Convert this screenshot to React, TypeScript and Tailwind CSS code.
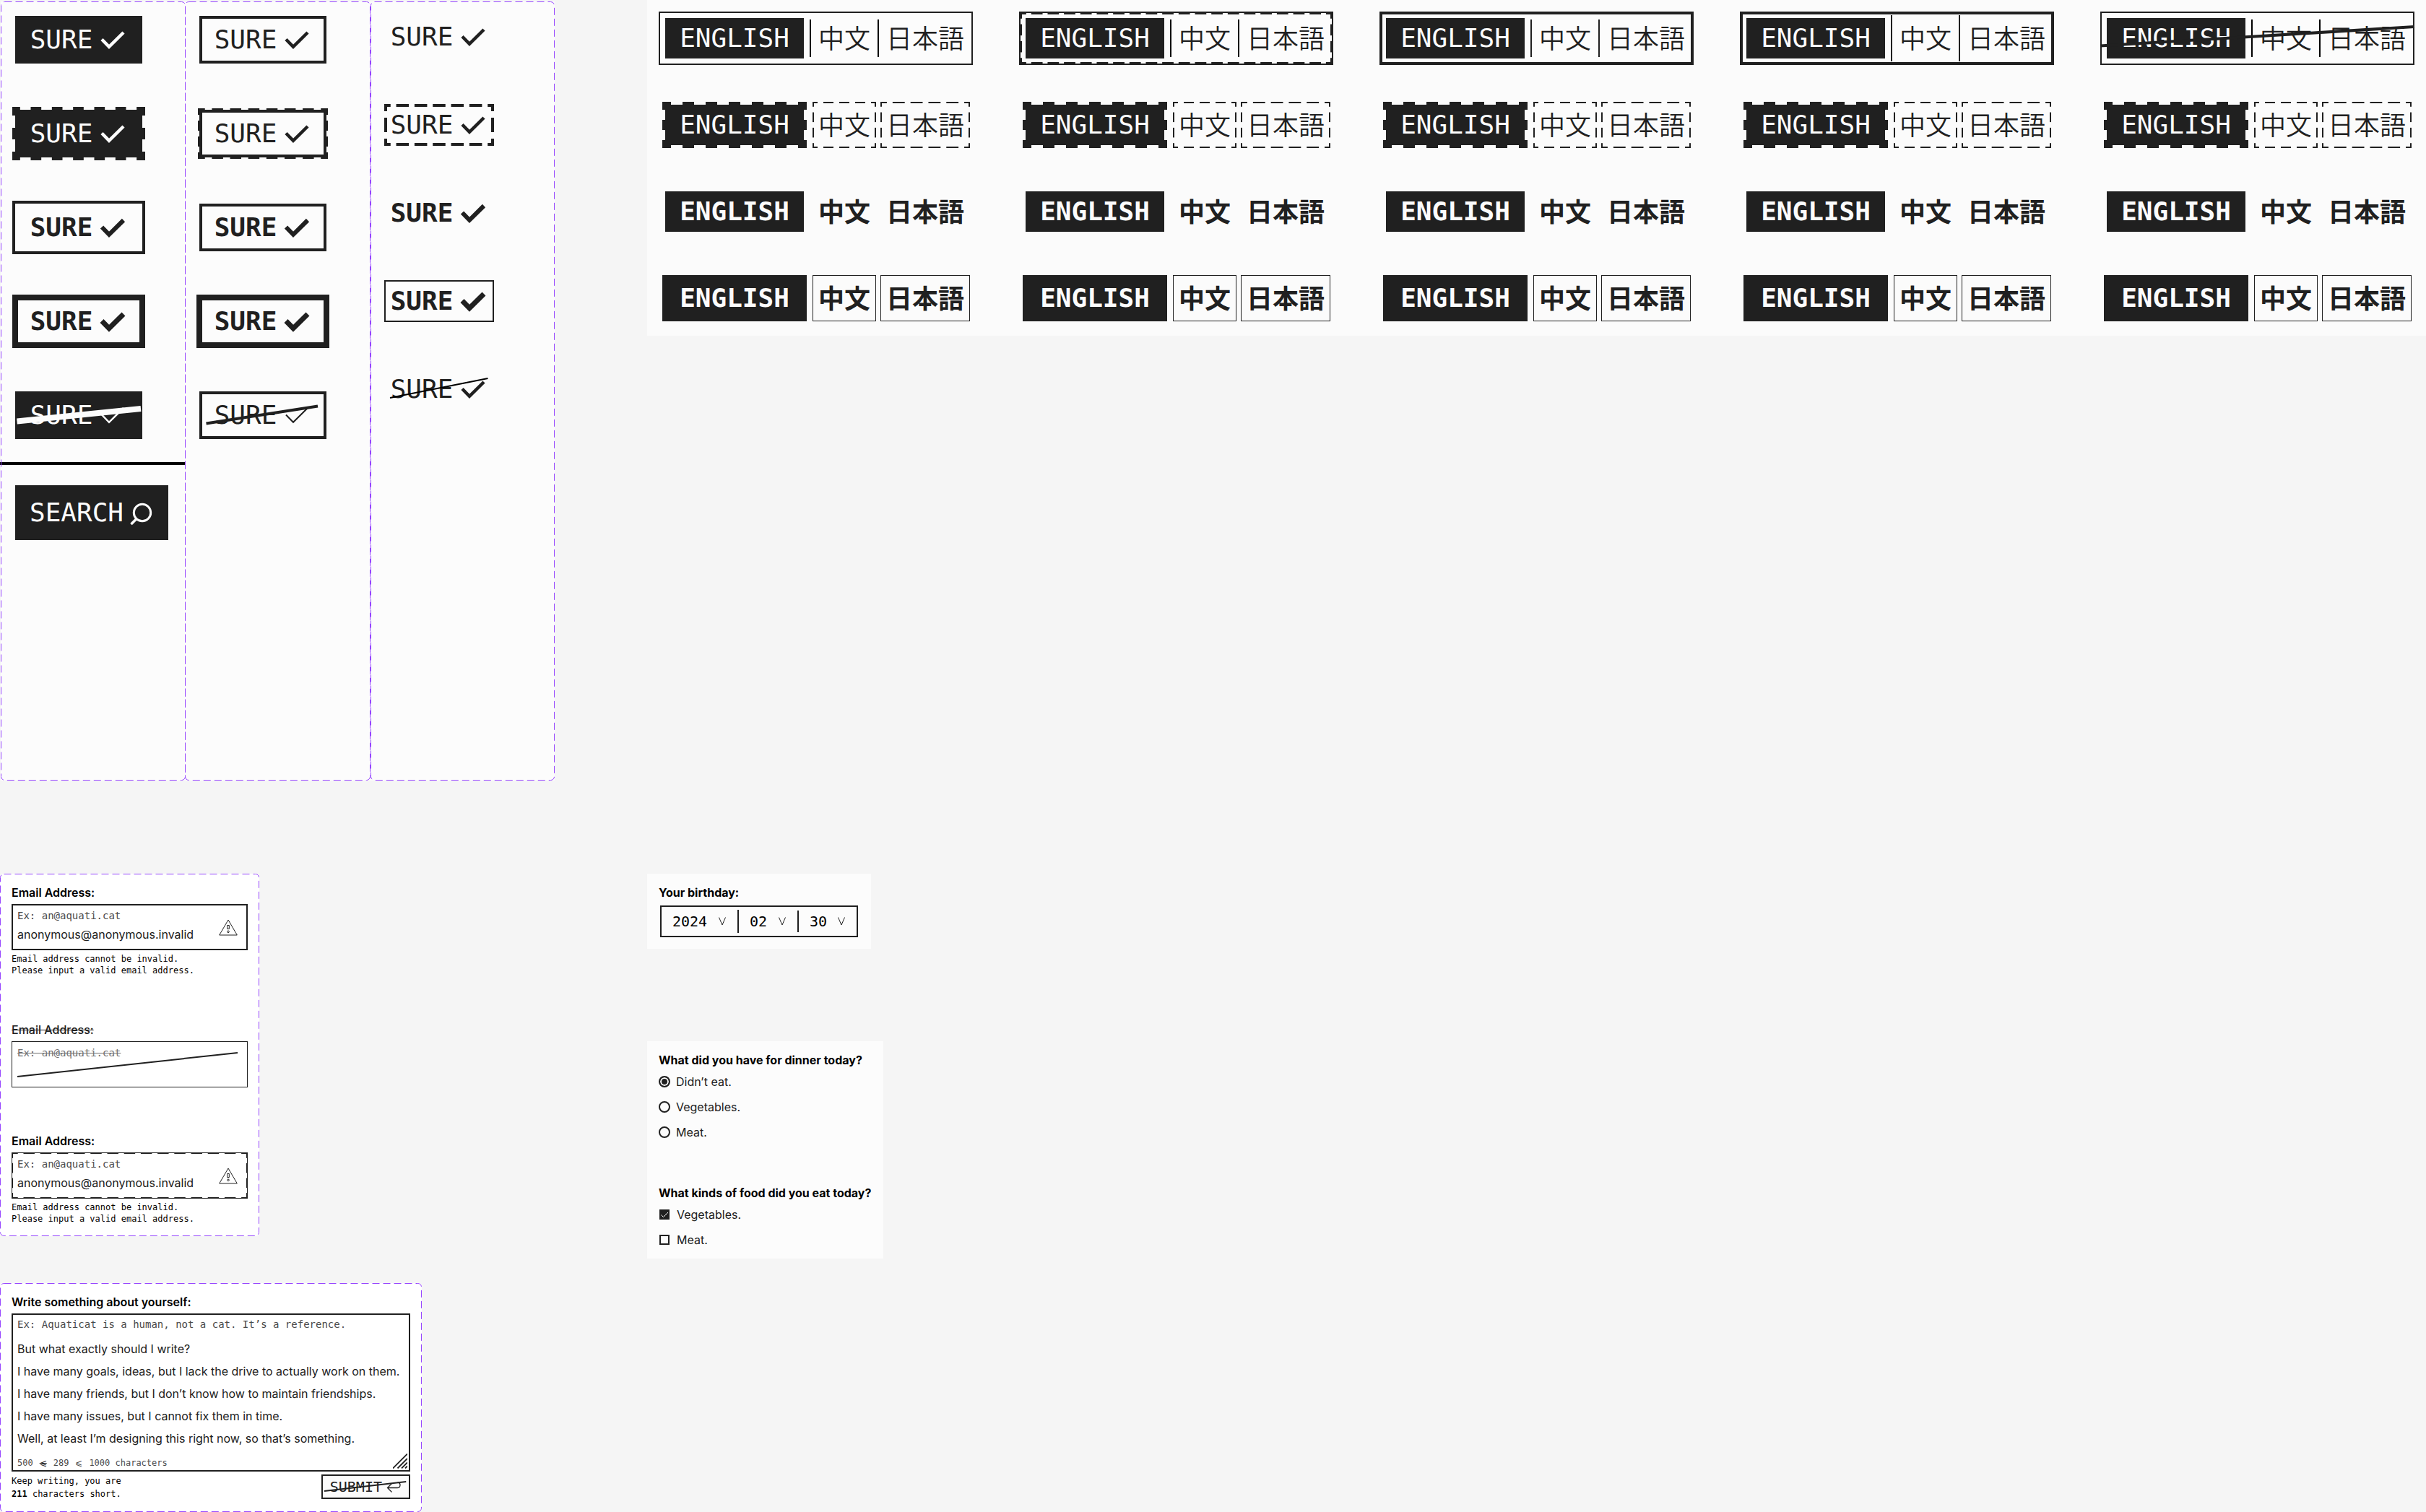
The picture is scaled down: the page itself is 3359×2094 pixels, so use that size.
import type { ReactNode } from "react";
import { useId } from "react";

const MONO = "font-['DejaVu_Sans_Mono','Liberation_Mono',monospace]";
const CJK = "font-['Noto_Sans_CJK_JP','Noto_Sans_CJK_SC',sans-serif]";

/* Dashed frame whose dashes are rounded to whole periods on every side. */
const DASH =
  "pointer-events-none absolute " +
  "[background-image:linear-gradient(90deg,#202020_var(--s),transparent_var(--s)_var(--e),#202020_var(--e)),linear-gradient(90deg,#202020_var(--s),transparent_var(--s)_var(--e),#202020_var(--e)),linear-gradient(#202020_var(--s),transparent_var(--s)_var(--e),#202020_var(--e)),linear-gradient(#202020_var(--s),transparent_var(--s)_var(--e),#202020_var(--e))] " +
  "[background-size:var(--p)_var(--t),var(--p)_var(--t),var(--t)_var(--p),var(--t)_var(--p)] " +
  "[background-repeat:round_no-repeat,round_no-repeat,no-repeat_round,no-repeat_round] " +
  "[background-position:0_var(--o),0_calc(100%-var(--o)),var(--o)_0,calc(100%-var(--o))_0]";

const DASH_TEETH = `${DASH} -inset-1 border-4 border-transparent [--s:25%] [--e:75%] [--p:30px] [--t:4px] [--o:-4px]`;
const DASH_RIM = `${DASH} -inset-1.5 border-2 border-transparent [--s:32%] [--e:68%] [--p:25px] [--t:2px] [--o:-2px]`;
const DASH_THICK = `${DASH} inset-0 [--s:34%] [--e:66%] [--p:26px] [--t:4px] [--o:0px]`;
const DASH_THIN = `${DASH} inset-0 [--s:34%] [--e:66%] [--p:23px] [--t:2px] [--o:0px]`;
const DASH_FIELD = `${DASH} inset-0 [--s:34%] [--e:66%] [--p:23px] [--t:1px] [--o:0px]`;

function VariantFrame() {
  return (
    <svg className="pointer-events-none absolute inset-0 size-full" aria-hidden="true">
      <rect
        x="0.5"
        y="0.5"
        rx="5"
        className="h-[calc(100%-1px)] w-[calc(100%-1px)]"
        fill="none"
        stroke="#9747FF"
        strokeDasharray="10 5"
      />
    </svg>
  );
}

function Check({ weight }: { weight: number }) {
  return (
    <svg width="40" height="40" viewBox="0 0 40 40" fill="none" stroke="currentColor" aria-hidden="true">
      <path d="M5 19.5 15 29.8 35 10" strokeWidth={weight} />
    </svg>
  );
}

function Strike({ box, line, weight, className }: { box: string; line: string; weight: number; className: string }) {
  return (
    <svg
      viewBox={box}
      preserveAspectRatio="none"
      className={`pointer-events-none absolute overflow-visible ${className}`}
      fill="none"
      stroke="currentColor"
      strokeWidth={weight}
      aria-hidden="true"
    >
      <path d={line} />
    </svg>
  );
}

type SureProps = { className: string; bold?: boolean; tick: number; disabled?: boolean; children?: ReactNode };

function Sure({ className, bold, tick, disabled, children }: SureProps) {
  return (
    <button
      type="button"
      disabled={disabled}
      className={`relative flex items-center justify-center gap-2 text-4xl leading-none ${MONO} ${bold ? "font-bold" : "font-normal"} ${className}`}
    >
      SURE
      <Check weight={tick} />
      {children}
    </button>
  );
}

function Cell({ children }: { children: ReactNode }) {
  return <div className="flex h-[74px] w-46 items-center justify-center">{children}</div>;
}

const M = "h-[66px] w-44";
const L = "h-[74px] w-46";
const S = "h-[58px] w-38";
const DARK = "bg-[#202020] text-[#fcfcfc]";
const INK = "text-[#202020]";

function ButtonVariants() {
  return (
    <section className="mt-0.5 ml-px flex h-[1079px] w-[767px] bg-[#fcfcfc]">
      <div className="relative w-64 pt-4">
        <div className="flex flex-col gap-14 pl-4">
          <Cell>
            <Sure className={`${M} ${DARK}`} tick={4.5} />
          </Cell>
          <Cell>
            <Sure className={`${M} ${DARK}`} tick={4.5}>
              <span className={DASH_TEETH} />
            </Sure>
          </Cell>
          <Cell>
            <Sure className={`${L} ${INK} border-4 border-[#202020]`} bold tick={6} />
          </Cell>
          <Cell>
            <Sure className={`${L} ${INK} border-8 border-[#202020]`} bold tick={7} />
          </Cell>
          <Cell>
            <Sure className={`${M} ${DARK}`} tick={2.5} disabled>
              <Strike box="0 0 176 66" line="M2.5 41.5 174 24" weight={8} className="inset-0 size-full" />
            </Sure>
          </Cell>
        </div>
        <hr className="mt-7 -ml-px h-1 border-0 bg-black" />
        <VariantFrame />
        <button
          type="button"
          className={`mt-7 ml-5 flex h-19 items-center gap-0.5 px-5 text-4xl leading-none ${MONO} ${DARK}`}
        >
          SEARCH
          <svg width="40" height="40" viewBox="0 0 40 40" fill="none" stroke="currentColor" strokeWidth="3" aria-hidden="true">
            <circle cx="24" cy="20" r="11.7" />
            <path d="M16 28.5 8.5 36" strokeWidth="3.6" />
          </svg>
        </button>
      </div>

      <div className="relative -ml-px w-[257px] pt-4">
        <div className="flex flex-col gap-14 pl-4">
          <Cell>
            <Sure className={`${M} ${INK} border-4 border-[#202020]`} tick={4.5} />
          </Cell>
          <Cell>
            <Sure className={`${M} ${INK} border-4 border-[#202020]`} tick={4.5}>
              <span className={DASH_RIM} />
            </Sure>
          </Cell>
          <Cell>
            <Sure className={`${M} ${INK} border-4 border-[#202020]`} bold tick={6} />
          </Cell>
          <Cell>
            <Sure className={`${L} ${INK} border-8 border-[#202020]`} bold tick={7} />
          </Cell>
          <Cell>
            <Sure className={`${M} ${INK} border-4 border-[#202020]`} tick={2} disabled>
              <Strike box="4 4 168 58" line="M9.5 44.5 164 20.5" weight={4} className="inset-0 size-full" />
            </Sure>
          </Cell>
        </div>
        <VariantFrame />
      </div>

      <div className="relative w-[255px] pt-5">
        <div className="flex flex-col gap-16 pl-[19px]">
          <Sure className={`${S} ${INK}`} tick={4.5} />
          <Sure className={`${S} ${INK}`} tick={4.5}>
            <span className={DASH_THICK} />
          </Sure>
          <Sure className={`${S} ${INK}`} bold tick={6} />
          <Sure className={`${S} ${INK} border-2 border-[#202020]`} bold tick={7} />
          <Sure className={`${S} ${INK}`} tick={4.5} disabled>
            <Strike box="0 0 152 58" line="M8 41 143.5 14" weight={2} className="inset-0 size-full text-black" />
          </Sure>
        </div>
        <VariantFrame />
      </div>
    </section>
  );
}

const ENGLISH = `${MONO} ${DARK} relative text-4xl leading-none`;
const HAN = `${CJK} ${INK} relative h-16 pb-1 text-4xl leading-none`;

function LangRow({
  className,
  bold,
  english,
  han,
  divider,
  dashed,
  children,
}: {
  className: string;
  bold?: boolean;
  english: string;
  han?: string;
  divider?: string;
  dashed?: boolean;
  children?: ReactNode;
}) {
  const weight = bold ? "font-bold" : "font-normal";
  const hanWeight = bold ? "font-bold" : "font-[350]";
  const bar = `w-0.5 shrink-0 ${divider ?? ""}`;
  return (
    <div className={`relative flex h-[74px] items-center gap-0.5 ${className}`}>
      <div className="mr-0.5 flex w-50 shrink-0 justify-center">
        <button type="button" className={`${ENGLISH} ${english} ${weight}`}>
          ENGLISH
          {dashed && <span className={DASH_TEETH} />}
        </button>
      </div>
      <span className={bar} />
      <button type="button" className={`${HAN} w-22 shrink-0 ${hanWeight} ${han ?? ""}`}>
        中文
        {dashed && <span className={DASH_THIN} />}
      </button>
      <span className={bar} />
      <button type="button" className={`${HAN} w-31 shrink-0 ${hanWeight} ${han ?? ""}`}>
        日本語
        {dashed && <span className={DASH_THIN} />}
      </button>
      {children}
    </div>
  );
}

const LANG_FRAMES = [
  { frame: "border-2 pl-[3px]", divider: "h-13 bg-black" },
  { frame: "border-2 pl-[3px]", divider: "h-13 bg-black", dashed: true },
  { frame: "border-4 pl-px", divider: "h-13 bg-[#202020]" },
  { frame: "border-4 pl-px", divider: "h-16 bg-[#202020]" },
  { frame: "border-2 pl-[3px]", divider: "h-13 bg-black", struck: true },
];

function LanguageVariants() {
  return (
    <section className="flex gap-16 bg-[#fbfbfb] px-4 pt-4 pb-[15px]">
      {LANG_FRAMES.map((item, i) => (
        <div key={i} className="flex w-[435px] shrink-0 flex-col gap-[46px]">
          <LangRow
            className={`border-[#202020] bg-[#fcfcfc] ${item.frame}`}
            english="h-14 w-48"
            divider={item.divider}
          >
            {item.dashed && <span className={DASH_THIN} />}
            {item.struck && (
              <Strike
                box="2 2 431 70"
                line="M0 47.5 435 21"
                weight={4}
                className="inset-0 size-full text-[#202020]"
              />
            )}
          </LangRow>
          <LangRow className="pl-[5px]" english="h-14 w-48" dashed />
          <LangRow className="pl-[5px]" english="h-14 w-48" bold />
          <LangRow className="pl-[5px]" english="h-16 w-50" han="border border-[#202020]" bold />
        </div>
      ))}
    </section>
  );
}

function Warning() {
  return (
    <svg width="26" height="23" viewBox="0 0 26 23" fill="none" stroke="#202020" strokeWidth="1" aria-hidden="true">
      <path d="M13 1 25.3 22H.7Z" />
      <path d="M11.7 8.5h2.6v5h-2.6Z" />
      <circle cx="13" cy="17.3" r="1.3" />
    </svg>
  );
}

function EmailField({ state }: { state: "solid" | "disabled" | "dashed" }) {
  const id = useId();
  const off = state === "disabled";
  return (
    <div>
      <label
        htmlFor={id}
        className={`block text-base leading-5 ${off ? "font-medium text-[#202020] line-through" : "font-semibold text-black"}`}
      >
        Email Address:
      </label>
      <div
        className={`relative mt-1.5 flex h-16 items-center border-[#202020] ${state === "solid" ? "border-2 px-1.5" : "border px-[7px]"}`}
      >
        <div className="min-w-0 flex-1 pb-1">
          <p className={`text-sm leading-4 ${MONO} ${off ? "text-[#707070] line-through" : "text-[#4a4a4a]"}`}>
            Ex: an@aquati.cat
          </p>
          <input
            id={id}
            type="email"
            disabled={off}
            defaultValue={off ? "" : "anonymous@anonymous.invalid"}
            className="mt-2 block h-5 w-full bg-transparent text-base leading-5 text-[#202020] outline-none"
          />
        </div>
        {!off && (
          <span className="mr-1.5">
            <Warning />
          </span>
        )}
        {off && (
          <Strike
            box="1 1 325 62"
            line="M8 49 313 16"
            weight={2}
            className="inset-0 size-full text-[#202020]"
          />
        )}
        {state === "dashed" && <span className={DASH_FIELD} />}
      </div>
      {!off && (
        <p className={`mt-1 text-xs leading-4 text-black ${MONO}`}>
          Email address cannot be invalid.
          <br />
          Please input a valid email address.
        </p>
      )}
    </div>
  );
}

const ABOUT = [
  "But what exactly should I write?",
  "I have many goals, ideas, but I lack the drive to actually work on them.",
  "I have many friends, but I don’t know how to maintain friendships.",
  "I have many issues, but I cannot fix them in time.",
  "Well, at least I’m designing this right now, so that’s something.",
].join("\n");

function AboutForm() {
  const id = useId();
  return (
    <section className="relative w-[584px] rounded-[5px] bg-white p-4">
      <VariantFrame />
      <label htmlFor={id} className="block text-base leading-5 font-semibold text-black">
        Write something about yourself:
      </label>
      <div className="relative mt-1.5 border-2 border-[#202020] px-1.5 pt-[5px] pb-0.5">
        <p className={`text-sm leading-4 text-[#4a4a4a] ${MONO}`}>
          Ex: Aquaticat is a human, not a cat. It’s a reference.
        </p>
        <textarea
          id={id}
          rows={5}
          wrap="off"
          defaultValue={ABOUT}
          className="mt-[11px] block w-full resize-none overflow-hidden bg-transparent text-base leading-[31px] text-[#202020] outline-none"
        />
        <p className={`mt-2.5 flex gap-2 text-xs leading-4 text-[#4a4a4a] ${MONO}`}>
          <span>500</span>
          <span className="w-3 text-center text-[#202020] line-through">⩽</span>
          <span>289</span>
          <span className="w-3 text-center">⩽</span>
          <span>1000 characters</span>
        </p>
        <svg
          className="absolute right-0.5 bottom-0.5"
          width="20"
          height="21"
          viewBox="0 0 20 21"
          stroke="#202020"
          strokeWidth="1.8"
          aria-hidden="true"
        >
          <path d="M0 20.5 20 .5M6.5 20.5 20 7M12 20.5 20 12.5M17 20.5 20 17.5" />
        </svg>
      </div>
      <div className="mt-1 flex items-start justify-between">
        <p className={`text-xs leading-[18px] text-black ${MONO}`}>
          Keep writing, you are
          <br />
          <strong>211</strong> characters short.
        </p>
        <button
          type="button"
          disabled
          className={`relative flex h-[34px] items-center gap-1.5 border-2 border-[#202020] bg-[#fbfbfb] px-2.5 text-xl leading-none text-[#202020] ${MONO}`}
        >
          SUBMIT
          <svg width="21" height="17" viewBox="0 0 21 17" fill="none" stroke="currentColor" strokeWidth="1.3" aria-hidden="true">
            <path d="M7.5 3.5 1.5 9.5 7.5 15.5M1.5 9.5H15C20 9.5 20.5 2.5 15.5 2" />
          </svg>
          <Strike box="2 2 119 30" line="M4 23 117 10" weight={2} className="inset-0 size-full" />
        </button>
      </div>
    </section>
  );
}

function DatePart({ label, options, className }: { label: string; options: string[]; className: string }) {
  return (
    <div className="relative flex items-center">
      <select
        aria-label={label}
        className={`appearance-none bg-transparent text-xl leading-6 text-black outline-none ${MONO} ${className}`}
      >
        {options.map((o) => (
          <option key={o}>{o}</option>
        ))}
      </select>
      <svg
        className="pointer-events-none absolute right-4"
        width="10"
        height="12"
        viewBox="0 0 10 12"
        fill="none"
        stroke="#202020"
        aria-hidden="true"
      >
        <path d="M.5.5 5 11 9.5.5" />
      </svg>
    </div>
  );
}

function Birthday() {
  return (
    <section className="w-[310px] bg-[#fcfcfc] p-4">
      <fieldset>
        <legend className="text-base leading-5 font-bold text-black">Your birthday:</legend>
        <div className="mx-0.5 mt-2 flex h-11 items-center border-2 border-[#202020]">
          <DatePart label="Year" options={["2024", "2023"]} className="w-[105px] pl-[15px]" />
          <span className="h-8 w-0.5 bg-[#202020]" />
          <DatePart label="Month" options={["02", "03"]} className="w-[81px] pl-[15px]" />
          <span className="h-[30px] w-0.5 bg-[#202020]" />
          <DatePart label="Day" options={["30", "31"]} className="w-[80px] pl-[15px]" />
        </div>
      </fieldset>
    </section>
  );
}

function Food() {
  return (
    <section className="mt-32 w-[327px] bg-[#fcfcfc] p-4">
      <fieldset>
        <legend className="text-base leading-5 font-bold whitespace-nowrap text-black">
          What did you have for dinner today?
        </legend>
        <div className="mt-2.5 flex flex-col gap-[15px]">
          {["Didn’t eat.", "Vegetables.", "Meat."].map((t, i) => (
            <label key={t} className="flex items-center gap-2 text-base leading-5 text-[#202020]">
              <input
                type="radio"
                name="dinner"
                defaultChecked={i === 0}
                className="size-4 appearance-none rounded-full border-2 border-[#202020] checked:bg-[#202020] checked:shadow-[inset_0_0_0_2px_#fcfcfc]"
              />
              {t}
            </label>
          ))}
        </div>
      </fieldset>
      <fieldset className="mt-16">
        <legend className="text-base leading-5 font-bold whitespace-nowrap text-black">
          What kinds of food did you eat today?
        </legend>
        <div className="mt-2.5 flex flex-col gap-[15px]">
          {["Vegetables.", "Meat."].map((t, i) => (
            <label key={t} className="relative flex items-center gap-2.5 pl-px text-base leading-5 text-[#202020]">
              <input
                type="checkbox"
                defaultChecked={i === 0}
                className="peer size-3.5 appearance-none border-2 border-[#202020] checked:bg-[#202020]"
              />
              <svg
                className="pointer-events-none absolute left-px hidden peer-checked:block"
                width="14"
                height="14"
                viewBox="0 0 14 14"
                fill="none"
                stroke="#fcfcfc"
                aria-hidden="true"
              >
                <path d="M2.5 7.5 5.5 10.5 12 4" />
              </svg>
              {t}
            </label>
          ))}
        </div>
      </fieldset>
    </section>
  );
}

export default function App() {
  return (
    <main className="flex min-h-screen gap-32 overflow-hidden bg-[#f5f5f5] font-['Inter',sans-serif]">
      <div className="w-3xl shrink-0">
        <ButtonVariants />
        <section className="relative mt-[129px] flex w-[359px] flex-col gap-16 rounded-[5px] bg-white p-4">
          <VariantFrame />
          <EmailField state="solid" />
          <EmailField state="disabled" />
          <EmailField state="dashed" />
        </section>
        <div className="mt-[65px]">
          <AboutForm />
        </div>
      </div>
      <div className="min-w-0 flex-1">
        <LanguageVariants />
        <div className="mt-[745px]">
          <Birthday />
          <Food />
        </div>
      </div>
    </main>
  );
}
